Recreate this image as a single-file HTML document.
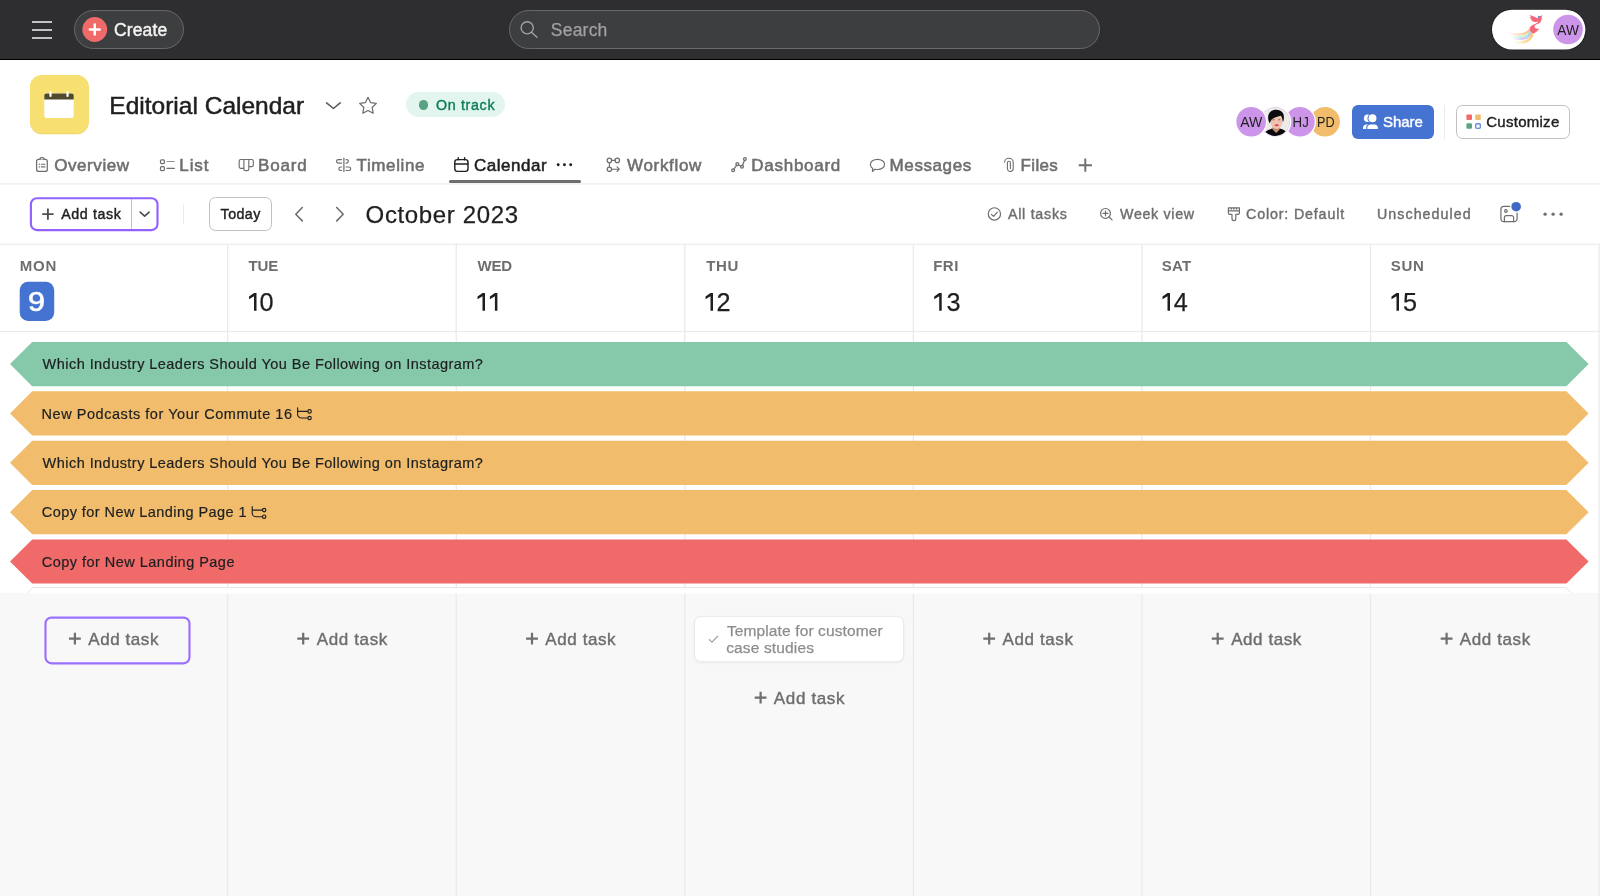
<!DOCTYPE html>
<html><head><meta charset="utf-8"><title>Editorial Calendar</title>
<style>
*{box-sizing:border-box;margin:0;padding:0}
html,body{width:1600px;height:896px;overflow:hidden;background:#fff}
body{font-family:"Liberation Sans",sans-serif;color:#1e1f21;position:relative}
#wrap{position:absolute;left:0;top:0;width:1600px;height:896px;will-change:transform}
.abs{position:absolute}
.t{position:absolute;white-space:nowrap;line-height:1}
.med{-webkit-text-stroke:0.4px currentColor}
.semi{-webkit-text-stroke:0.55px currentColor}
svg{position:absolute;overflow:visible}
/* top bar */
#topbar{left:0;top:0;width:1600px;height:59px;background:#2e2e30}
#topline{left:0;top:59px;width:1600px;height:1px;background:#000}
#create{left:74px;top:10px;width:110px;height:39px;border-radius:20px;background:#3d3e40;border:1px solid #68686a}
#search{left:509px;top:10px;width:591px;height:39px;border-radius:20px;background:#3d3e40;border:1px solid #69696b}
/* header */
#tx-title{-webkit-text-stroke:0.5px currentColor}
#tx-search,#tx-month,.dnum,#tx-card1,#tx-card2{-webkit-text-stroke:0.25px currentColor}
#tx-n1{transform:scaleX(1.13);transform-origin:0 0;-webkit-text-stroke:0.6px currentColor}
#pill{left:406px;top:92px;width:99px;height:25px;border-radius:13px;background:#e2f5ee}
.tab{color:#6d6e6f;font-size:16.5px}
#tabsel{left:449px;top:180px;width:132px;height:3px;background:#6d6e6f;border-radius:1.5px}
/* toolbar */
#adddiv{left:131px;top:199px;width:1px;height:30px;background:#c2c0c0}
#tsep{left:183px;top:204px;width:1px;height:20px;background:#edeae9}
#today{left:209px;top:197px;width:63px;height:34px;border-radius:6.5px;border:1px solid #c2bfbf;background:#fff}
.tl{color:#6d6e6f;font-size:14px}
/* calendar */
#greyarea{left:0;top:593px;width:1600px;height:303px;background:#f9f8f8}
.dow{color:#6d6e6f;font-size:14px;font-weight:bold;letter-spacing:.6px}
.dnum{font-size:24px;color:#1e1f21}
.bt{font-size:14.5px;color:#1e1f21;-webkit-text-stroke:0.2px currentColor}
.addt{color:#6d6e6f;font-size:18px}
#card{left:694px;top:616px;width:210px;height:46px;border-radius:7px;background:#fff;border:1px solid #edeae9;box-shadow:0 1px 3px rgba(0,0,0,.06)}
/*FIT-START*/
#tx-create{left:114.00px!important;top:22.00px!important;font-size:17.5px!important;letter-spacing:0.130px!important}
#tx-search{left:550.80px!important;top:22.00px!important;font-size:17.5px!important;letter-spacing:0.220px!important}
#tx-title{left:109.30px!important;top:94.00px!important;font-size:24.5px!important;letter-spacing:0.006px!important}
#tx-ontrack{left:436.00px!important;top:98.00px!important;font-size:14.25px!important;letter-spacing:0.671px!important}
#tx-share{left:1382.90px!important;top:114.00px!important;font-size:15px!important;letter-spacing:-0.000px!important}
#tx-cust{left:1486.20px!important;top:114.00px!important;font-size:15px!important;letter-spacing:0.275px!important}
#tx-t1{left:54.20px!important;top:157.00px!important;font-size:17px!important;letter-spacing:0.579px!important}
#tx-t2{left:179.30px!important;top:157.00px!important;font-size:17px!important;letter-spacing:0.900px!important}
#tx-t3{left:258.00px!important;top:157.00px!important;font-size:17px!important;letter-spacing:0.825px!important}
#tx-t4{left:356.60px!important;top:157.00px!important;font-size:17px!important;letter-spacing:0.600px!important}
#tx-t5{left:473.90px!important;top:157.00px!important;font-size:17px!important;letter-spacing:0.557px!important}
#tx-t6{left:627.00px!important;top:157.00px!important;font-size:17px!important;letter-spacing:0.686px!important}
#tx-t7{left:751.30px!important;top:157.00px!important;font-size:17px!important;letter-spacing:0.731px!important}
#tx-t8{left:889.60px!important;top:157.00px!important;font-size:17px!important;letter-spacing:0.586px!important}
#tx-t9{left:1020.60px!important;top:157.00px!important;font-size:17px!important;letter-spacing:0.325px!important}
#tx-add0{left:61.20px!important;top:207.00px!important;font-size:14.25px!important;letter-spacing:0.614px!important}
#tx-today{left:220.60px!important;top:207.00px!important;font-size:14.25px!important;letter-spacing:0.425px!important}
#tx-month{left:365.60px!important;top:203.00px!important;font-size:24px!important;letter-spacing:0.645px!important}
#tx-all{left:1007.90px!important;top:207.00px!important;font-size:14.25px!important;letter-spacing:0.744px!important}
#tx-week{left:1120.00px!important;top:207.00px!important;font-size:14.25px!important;letter-spacing:0.687px!important}
#tx-color{left:1246.10px!important;top:207.00px!important;font-size:14.25px!important;letter-spacing:0.838px!important}
#tx-uns{left:1377.00px!important;top:207.00px!important;font-size:14.25px!important;letter-spacing:1.040px!important}
#tx-b1{left:42.60px!important;top:357.00px!important;font-size:14.5px!important;letter-spacing:0.453px!important}
#tx-b2{left:41.60px!important;top:407.00px!important;font-size:14.5px!important;letter-spacing:0.539px!important}
#tx-b3{left:42.60px!important;top:456.00px!important;font-size:14.5px!important;letter-spacing:0.453px!important}
#tx-b4{left:41.80px!important;top:505.00px!important;font-size:14.5px!important;letter-spacing:0.435px!important}
#tx-b5{left:41.80px!important;top:555.00px!important;font-size:14.5px!important;letter-spacing:0.471px!important}
#tx-card1{left:726.90px!important;top:623.00px!important;font-size:15.5px!important;letter-spacing:0.125px!important}
#tx-card2{left:726.20px!important;top:640.00px!important;font-size:15.5px!important;letter-spacing:0.145px!important}
#tx-d1{left:19.70px!important;top:258.00px!important;font-size:15px!important;letter-spacing:0.800px!important}
#tx-d2{left:248.60px!important;top:258.00px!important;font-size:15px!important;letter-spacing:-0.225px!important}
#tx-d3{left:477.50px!important;top:258.00px!important;font-size:15px!important;letter-spacing:-0.200px!important}
#tx-d4{left:706.20px!important;top:258.00px!important;font-size:15px!important;letter-spacing:0.600px!important}
#tx-d5{left:933.20px!important;top:258.00px!important;font-size:15px!important;letter-spacing:0.500px!important}
#tx-d6{left:1161.80px!important;top:258.00px!important;font-size:15px!important;letter-spacing:0.200px!important}
#tx-d7{left:1390.80px!important;top:258.00px!important;font-size:15px!important;letter-spacing:0.700px!important}
#tx-n1{left:28.20px!important;top:289.00px!important;font-size:27px!important;letter-spacing:14.300px!important}
#tx-n2{left:259.50px!important;top:290.00px!important;font-size:25.25px!important;letter-spacing:0.000px!important}
#tx-n4{left:716.50px!important;top:290.00px!important;font-size:25.25px!important;letter-spacing:0.000px!important}
#tx-n5{left:946.40px!important;top:290.00px!important;font-size:25.25px!important;letter-spacing:0.000px!important}
#tx-n6{left:1173.80px!important;top:290.00px!important;font-size:25.25px!important;letter-spacing:0.000px!important}
#tx-n7{left:1402.90px!important;top:290.00px!important;font-size:25.25px!important;letter-spacing:0.000px!important}
#tx-a1{left:88.29px!important;top:631.00px!important;font-size:17px!important;letter-spacing:0.571px!important}
#tx-a2{left:316.78px!important;top:631.00px!important;font-size:17px!important;letter-spacing:0.629px!important}
#tx-a3{left:545.27px!important;top:631.00px!important;font-size:17px!important;letter-spacing:0.600px!important}
#tx-a4{left:773.86px!important;top:690.00px!important;font-size:17px!important;letter-spacing:0.643px!important}
#tx-a5{left:1002.55px!important;top:631.00px!important;font-size:17px!important;letter-spacing:0.600px!important}
#tx-a6{left:1231.13px!important;top:631.00px!important;font-size:17px!important;letter-spacing:0.571px!important}
#tx-a7{left:1459.72px!important;top:631.00px!important;font-size:17px!important;letter-spacing:0.614px!important}
/*FIT-END*/
</style></head><body>
<div id="wrap">
<div class="abs" id="topbar"></div><div class="abs" id="topline"></div>
<div class="abs" id="create"></div>
<div class="t med" id="tx-create" style="left:114.5px;top:20px;font-size:17.5px;color:#f5f4f3">Create</div>
<div class="abs" id="search"></div>
<div class="t" id="tx-search" style="left:551.5px;top:20px;font-size:17.5px;color:#a2a0a2">Search</div>

<!-- project header -->
<div class="t" id="tx-title" style="left:110.5px;top:93px;font-size:24px;color:#1e1f21">Editorial Calendar</div>
<div class="abs" id="pill"></div>
<div class="abs" style="left:418.5px;top:100px;width:9.5px;height:9.5px;border-radius:50%;background:#58a182"></div>
<div class="t med" id="tx-ontrack" style="left:436px;top:97.5px;font-size:14.5px;color:#0d7f56">On track</div>

<!-- avatars -->

<div class="abs" style="left:1352px;top:105px;width:82px;height:34px;border-radius:6px;background:#4573d2"></div>
<div class="t med" id="tx-share" style="left:1383.5px;top:114.5px;font-size:14.5px;color:#fff">Share</div>
<div class="abs" style="left:1444px;top:105px;width:1px;height:34px;background:#edeae9"></div>
<div class="abs" style="left:1456px;top:105px;width:114px;height:34px;border-radius:6.5px;background:#fff;border:1px solid #c2bfbf"></div>
<div class="t med" id="tx-cust" style="left:1486.5px;top:114.5px;font-size:14.5px;color:#1e1f21">Customize</div>

<!-- tabs -->
<div class="abs" id="tabsel"></div>
<div class="t tab semi" id="tx-t1" style="left:54px;top:156.5px">Overview</div>
<div class="t tab semi" id="tx-t2" style="left:180px;top:156.5px">List</div>
<div class="t tab semi" id="tx-t3" style="left:259px;top:156.5px">Board</div>
<div class="t tab semi" id="tx-t4" style="left:356px;top:156.5px">Timeline</div>
<div class="t tab semi" id="tx-t5" style="left:474px;top:156.5px;color:#1e1f21">Calendar</div>
<div class="t tab semi" id="tx-t6" style="left:626px;top:156.5px">Workflow</div>
<div class="t tab semi" id="tx-t7" style="left:751px;top:156.5px">Dashboard</div>
<div class="t tab semi" id="tx-t8" style="left:889px;top:156.5px">Messages</div>
<div class="t tab semi" id="tx-t9" style="left:1021px;top:156.5px">Files</div>

<!-- toolbar -->
<div class="abs" id="adddiv"></div>
<div class="t med" id="tx-add0" style="left:61px;top:207px;font-size:14.5px;color:#1e1f21">Add task</div>
<div class="abs" id="tsep"></div>
<div class="abs" id="today"></div>
<div class="t med" id="tx-today" style="left:220.5px;top:207px;font-size:14.5px;color:#1e1f21">Today</div>
<div class="t" id="tx-month" style="left:366.5px;top:202px;font-size:24px;color:#1e1f21">October 2023</div>
<div class="t tl med" id="tx-all" style="left:1008px;top:207px">All tasks</div>
<div class="t tl med" id="tx-week" style="left:1120px;top:207px">Week view</div>
<div class="t tl med" id="tx-color" style="left:1246.5px;top:207px">Color: Default</div>
<div class="t tl med" id="tx-uns" style="left:1378px;top:207px">Unscheduled</div>

<!-- calendar columns -->
<div class="abs" id="greyarea"></div>
<svg id="grid" style="left:0;top:0" width="1600" height="896" viewBox="0 0 1600 896" shape-rendering="geometricPrecision">
<rect x="0" y="183.35" width="1600" height="1.15" fill="#edebea"/>
<rect x="0" y="243.7" width="1600" height="1.2" fill="#edebea"/>
<rect x="0" y="330.95" width="1600" height="1.2" fill="#edebea"/>
<rect x="227.05" y="244" width="1.2" height="652" fill="#ebe9e8"/>
<rect x="455.62" y="244" width="1.2" height="652" fill="#ebe9e8"/>
<rect x="684.19" y="244" width="1.2" height="652" fill="#ebe9e8"/>
<rect x="912.76" y="244" width="1.2" height="652" fill="#ebe9e8"/>
<rect x="1141.33" y="244" width="1.2" height="652" fill="#ebe9e8"/>
<rect x="1369.91" y="244" width="1.2" height="652" fill="#ebe9e8"/>
<rect x="1598.48" y="244" width="1.2" height="652" fill="#ebe9e8"/>
<polygon points="32.2,342.0 1566.4,342.0 1588.6,364.10 1566.4,386.20 32.2,386.20 10,364.10" fill="#86c8aa"/>
<polygon points="32.2,391.35 1566.4,391.35 1588.6,413.45 1566.4,435.55 32.2,435.55 10,413.45" fill="#f1bd6c"/>
<polygon points="32.2,440.7 1566.4,440.7 1588.6,462.80 1566.4,484.90 32.2,484.90 10,462.80" fill="#f1bd6c"/>
<polygon points="32.2,490.05 1566.4,490.05 1588.6,512.15 1566.4,534.25 32.2,534.25 10,512.15" fill="#f1bd6c"/>
<polygon points="32.2,539.4 1566.4,539.4 1588.6,561.50 1566.4,583.60 32.2,583.60 10,561.50" fill="#f06a6a"/>
<rect x="19.7" y="281.7" width="34.5" height="39.3" rx="8.5" fill="#4573d2"/>
</svg>

<div class="t dow" id="tx-d1" style="left:20px;top:259.5px">MON</div>
<div class="t dow" id="tx-d2" style="left:249px;top:259.5px">TUE</div>
<div class="t dow" id="tx-d3" style="left:477px;top:259.5px">WED</div>
<div class="t dow" id="tx-d4" style="left:706px;top:259.5px">THU</div>
<div class="t dow" id="tx-d5" style="left:934px;top:259.5px">FRI</div>
<div class="t dow" id="tx-d6" style="left:1163px;top:259.5px">SAT</div>
<div class="t dow" id="tx-d7" style="left:1391px;top:259.5px">SUN</div>
<div class="t dnum" id="tx-n1" style="left:30px;top:290px;color:#fff">9</div>
<div class="t dnum" id="tx-n2" style="left:248px;top:290px">0</div>
<div class="t dnum" id="tx-n3" style="left:477px;top:290px"></div>
<div class="t dnum" id="tx-n4" style="left:705px;top:290px">2</div>
<div class="t dnum" id="tx-n5" style="left:934px;top:290px">3</div>
<div class="t dnum" id="tx-n6" style="left:1162px;top:290px">4</div>
<div class="t dnum" id="tx-n7" style="left:1391px;top:290px">5</div>

<!-- bars -->
<div class="t bt" id="tx-b1" style="left:42px;top:357px">Which Industry Leaders Should You Be Following on Instagram?</div>
<div class="t bt" id="tx-b2" style="left:42px;top:406.3px">New Podcasts for Your Commute 16</div>
<div class="t bt" id="tx-b3" style="left:42px;top:455.5px">Which Industry Leaders Should You Be Following on Instagram?</div>
<div class="t bt" id="tx-b4" style="left:42px;top:504.8px">Copy for New Landing Page 1</div>
<div class="t bt" id="tx-b5" style="left:42px;top:554px">Copy for New Landing Page</div>

<!-- bottom -->
<div class="abs" id="card"></div>
<div class="t" id="tx-card1" style="left:726.5px;top:623px;font-size:14.5px;color:#8d8c8e">Template for customer</div>
<div class="t" id="tx-card2" style="left:726.5px;top:640.2px;font-size:14.5px;color:#8d8c8e">case studies</div>

<div class="t addt med" id="tx-a1" style="left:88.5px;top:629.5px">Add task</div>
<div class="t addt med" id="tx-a2" style="left:316.5px;top:629.5px">Add task</div>
<div class="t addt med" id="tx-a3" style="left:545.5px;top:629.5px">Add task</div>
<div class="t addt med" id="tx-a4" style="left:774px;top:688.5px">Add task</div>
<div class="t addt med" id="tx-a5" style="left:1002.5px;top:629.5px">Add task</div>
<div class="t addt med" id="tx-a6" style="left:1230.5px;top:629.5px">Add task</div>
<div class="t addt med" id="tx-a7" style="left:1460px;top:629.5px">Add task</div>
<!--ICONS-START-->
<svg id="icons" style="left:0;top:0;pointer-events:none" width="1600" height="896" viewBox="0 0 1600 896" fill="none" stroke-linecap="round" stroke-linejoin="round">
<defs>
<linearGradient id="tg1" x1="1509" y1="0" x2="1532" y2="0" gradientUnits="userSpaceOnUse"><stop offset="0" stop-color="#fbc58a" stop-opacity="0"/><stop offset=".45" stop-color="#fbc58a" stop-opacity=".75"/><stop offset="1" stop-color="#f7a35e"/></linearGradient>
<linearGradient id="tg2" x1="1511" y1="0" x2="1532" y2="0" gradientUnits="userSpaceOnUse"><stop offset="0" stop-color="#a8f0cf" stop-opacity="0"/><stop offset=".5" stop-color="#a8f0cf" stop-opacity=".85"/><stop offset="1" stop-color="#8fe3a8"/></linearGradient>
<linearGradient id="tg3" x1="1512" y1="0" x2="1532" y2="0" gradientUnits="userSpaceOnUse"><stop offset="0" stop-color="#c4b5f7" stop-opacity="0"/><stop offset=".5" stop-color="#bcb0f5" stop-opacity=".85"/><stop offset="1" stop-color="#9db4f4"/></linearGradient>
<linearGradient id="tg4" x1="1514" y1="0" x2="1533" y2="0" gradientUnits="userSpaceOnUse"><stop offset="0" stop-color="#fde2a0" stop-opacity="0"/><stop offset=".5" stop-color="#fcd98a" stop-opacity=".85"/><stop offset="1" stop-color="#f9bd5e"/></linearGradient>
<clipPath id="pc"><circle cx="1275.2" cy="121.8" r="14.1"/></clipPath>
</defs>
<!-- project icon -->
<rect x="30" y="75.3" width="58.7" height="58.9" rx="12" fill="#ecd367"/>
<rect x="30" y="74.9" width="58.7" height="58.7" rx="12" fill="#f8df72"/>
<rect x="44.3" y="93.4" width="29.4" height="24.5" rx="2" fill="#fff"/>
<path d="M44.3 99.5v-4.100a2 2 0 0 1 2-2h25.400a2 2 0 0 1 2 2v4.100z" fill="#504a2c"/>
<rect x="49.400" y="91.100" width="2.200" height="5.900" rx="1.100" fill="#fff"/><rect x="66.450" y="91.100" width="2.200" height="5.900" rx="1.100" fill="#fff"/>
<!-- user pill -->
<rect x="1491.200" y="8.900" width="95" height="41.400" rx="20.700" fill="#1d1d1f"/>
<rect x="1492" y="9.700" width="93.400" height="39.800" rx="19.900" fill="#fff"/>
<!-- hamburger -->
<path d="M32 22h20M32 30h20M32 38h20" stroke="#f5f4f3" stroke-width="1.7" stroke-linecap="butt"/>
<!-- create -->
<circle cx="94.75" cy="29.5" r="12.4" fill="#f06a6a"/>
<path d="M94.75 24.6v9.8M89.85 29.5h9.8" stroke="#fff" stroke-width="2.5"/>
<!-- search -->
<circle cx="527.2" cy="27.8" r="6.1" stroke="#a2a0a2" stroke-width="1.4"/>
<path d="M531.7 32.4L537 37.3" stroke="#a2a0a2" stroke-width="1.4"/>
<!-- bird -->
<g style="filter:blur(.35px)" opacity=".82">
<path d="M1531.300 27.500C1528 34 1520 35.800 1509.500 33.200" stroke="url(#tg1)" stroke-width="2.400"/>
<path d="M1531.700 29.300C1529.300 36.600 1521.500 38.100 1512 36.300" stroke="url(#tg2)" stroke-width="1.900"/>
<path d="M1532.100 30.500C1530.300 38.300 1522.800 40 1513.500 38.400" stroke="url(#tg3)" stroke-width="1.900"/>
<path d="M1532.700 31.500C1531.800 40.300 1525.300 43.200 1516 42.300" stroke="url(#tg4)" stroke-width="2.600"/>
</g>
<path d="M1542.700 15.200L1540.500 16.100C1538.600 15.900 1537.600 17.200 1537.600 18.500C1535 16.300 1531.600 15.500 1529.100 15.200L1531.300 16.700L1529.300 16.900L1531.500 18.300L1529.800 18.800L1532.300 20L1531.200 20.700L1533.900 21.700C1535.400 22.100 1536.900 22 1538.100 21.600C1537.900 22.700 1536.900 23.400 1535.500 23.800C1532 24.800 1529.700 26.800 1529.900 29.600C1530 31.700 1531.500 32.800 1533.300 33.200L1535.600 32.900L1535 32L1537.500 31.600L1536.700 30.700L1539.200 29.900L1538.200 29.300L1539.900 28.300C1537.800 29.300 1535.200 28.800 1534.600 27C1534.200 25.500 1535.300 24.700 1536.900 24.300C1539.800 23.600 1541.500 21.600 1541.600 19C1541.650 17.600 1541.700 16.400 1542.700 15.200Z" fill="#f5667a"/>
<circle cx="1538.800" cy="16.800" r="0.950" fill="#5b8def"/>
<!-- title chevron + star -->
<path d="M326.6 102.9L333.4 108.5L340.2 102.9" stroke="#58595b" stroke-width="1.6"/>
<path d="M368 97.3l2.55 5.3 5.8.8-4.2 4.05 1 5.75-5.15-2.75-5.15 2.75 1-5.75-4.2-4.05 5.8-.8z" stroke="#6d6e6f" stroke-width="1.25"/>
<!-- tab: overview -->
<g stroke="#6d6e6f" stroke-width="1.25">
<rect x="36.6" y="159.4" width="10.7" height="12" rx="2"/>
<path d="M39.9 159.4a2.1 1.7 0 0 1 4.2 0" fill="#fff"/>
<path d="M41.4 164.2h3.6M41.4 166.9h3.6" stroke-width="1.1"/>
<path d="M39.3 164.2h.2M39.3 166.9h.2" stroke-width="1.3"/>
<!-- list -->
<rect x="160.5" y="159.75" width="3.9" height="3.9" rx="1.1"/>
<rect x="160.5" y="166.65" width="3.9" height="3.9" rx="1.1"/>
<path d="M167 161.5h7.3" stroke-width="1" opacity=".75"/><path d="M167 168.4h7.3"/>
<!-- board -->
<path d="M243.9 159.5h-3.1a1.6 1.6 0 0 0-1.6 1.6v5.6a1.6 1.6 0 0 0 1.6 1.6h3.1zM243.9 159.5v9.5a1.6 1.6 0 0 0 1.6 1.6h1.7a1.6 1.6 0 0 0 1.6-1.6v-9.5zM248.8 159.5h2.9a1.6 1.6 0 0 1 1.6 1.6v3.9a1.6 1.6 0 0 1-1.6 1.6h-2.9z" stroke-width="1.15"/>
<!-- timeline -->
<path d="M343.9 158.2v13.3" stroke-width="1.2"/>
<path d="M341.6 159.6h-3.3a1.75 1.75 0 0 0 0 3.5h3.3M346 159.6h.6a1.75 1.75 0 0 1 0 3.5h-.6" stroke-width="1.2"/>
<path d="M341.6 167h-1a1.75 1.75 0 0 0 0 3.5h1M346 167h2.9a1.75 1.75 0 0 1 0 3.5h-2.9" stroke-width="1.2"/>
<!-- workflow -->
<circle cx="609.4" cy="160.4" r="2.2"/><circle cx="617.3" cy="160.4" r="2.2"/><circle cx="609.4" cy="169.2" r="2.2"/>
<path d="M611.6 160.4h3.5M609.4 162.6v4.4M611.6 169.2h7.6M617 166.9l2.3 2.3l-2.3 2.3" stroke-width="1.1"/>
<!-- dashboard -->
<circle cx="733.1" cy="170.2" r="1.4"/><circle cx="737.3" cy="164.1" r="1.4"/><circle cx="742" cy="166.8" r="1.4"/><circle cx="744.9" cy="159.1" r="1.4"/>
<path d="M733.9 169L736.5 165.3M738.5 164.8L740.8 166.1M742.5 165.5L744.4 160.4" stroke-width="1.3"/>
<!-- messages -->
<path d="M877.5 159.3c4 0 7.1 2.3 7.1 5.1s-3.100 5.100-7.100 5.100c-.9 0-1.800-.1-2.600-.3l-2.500 2.300l.3-3.100c-1.400-.9-2.300-2.300-2.300-4c0-2.800 3.100-5.100 7.100-5.100z" stroke-width="1.15"/>
<!-- files paperclip -->
<path d="M1004.600 162.300a4.300 4 0 0 1 8.600 0v6.300a2.900 2.900 0 0 1-5.800 0v-5.900a1.500 1.500 0 0 1 3 0v5.900" stroke-width="1.1"/>
<!-- plus -->
<path d="M1085.300 158.600v13.200M1078.700 165.200h13.200" stroke-width="1.9" stroke-linecap="butt"/>
</g>
<!-- tab: calendar (dark) -->
<g stroke="#1e1f21" stroke-width="1.4">
<rect x="454.800" y="159.600" width="13.200" height="11.800" rx="2.600"/>
<path d="M454.800 164h13.200M458.200 157.800v2M464.600 157.800v2"/>
</g>
<g fill="#1e1f21"><circle cx="558.200" cy="164.800" r="1.450"/><circle cx="564.450" cy="164.800" r="1.450"/><circle cx="570.700" cy="164.800" r="1.450"/></g>
<!-- share icon -->
<g>
<circle cx="1367.700" cy="118.200" r="3.800" fill="#fff"/>
<path d="M1363 129v-1.200c0-1.800 1.400-3.200 3.200-3.200h3v4.400z" fill="#fff"/>
<circle cx="1372.500" cy="118.300" r="5.050" fill="#4573d2"/>
<path d="M1366.200 130v-2.300c0-2.400 1.900-4.300 4.300-4.300h4.200c2.400 0 4.300 1.900 4.300 4.300v2.300z" fill="#4573d2"/>
<circle cx="1372.500" cy="118.300" r="3.950" fill="#fff"/>
<path d="M1367.300 129v-1.300c0-1.800 1.400-3.200 3.200-3.200h4.200c1.800 0 3.200 1.400 3.200 3.200v1.300z" fill="#fff"/>
</g>
<!-- customize icon -->
<rect x="1466.400" y="114.500" width="5.600" height="5.500" rx="1.100" fill="#f06a6a"/>
<rect x="1475.200" y="114.500" width="5.600" height="5.500" rx="1.100" fill="#f1bd6c"/>
<rect x="1466.400" y="123.300" width="5.600" height="5.500" rx="1.100" fill="#5da283"/>
<rect x="1475.750" y="123.850" width="4.500" height="4.400" rx=".7" stroke="#4573d2" stroke-width="1.100" fill="#fff"/>
<!-- toolbar -->
<rect x="30.9" y="198.2" width="126.6" height="31.85" rx="6" stroke="#9162ff" stroke-width="2.15"/>
<rect x="45.5" y="617.6" width="144" height="45.7" rx="6" stroke="#9b70ff" stroke-width="2.15"/>
<path d="M47.900 208.400v11.400M42.200 214.100h11.400" stroke="#4f5052" stroke-width="1.900" stroke-linecap="butt"/>
<path d="M140.200 212.100l4.450 4l4.450-4" stroke="#4f5052" stroke-width="1.700"/>
<path d="M302.300 207.500l-6.500 6.700l6.500 6.700M336.700 207.500l6.500 6.700l-6.500 6.700" stroke="#6d6e6f" stroke-width="1.600"/>
<g stroke="#6d6e6f" stroke-width="1.200">
<circle cx="994.400" cy="213.900" r="6.150"/><path d="M991.400 214.300l2.100 2.100l3.900-4.300"/>
<circle cx="1105.500" cy="213.400" r="4.900"/><path d="M1105.500 211v4.800M1103.100 213.400h4.800M1109.100 217l3 2.900"/>
<!-- brush -->
<path d="M1228.400 207.800h11v5.300a1.300 1.300 0 0 1-1.300 1.300h-2.300v4.400a1.900 1.900 0 0 1-3.800 0v-4.400h-2.300a1.300 1.300 0 0 1-1.300-1.300zM1228.400 210.900h11M1231.200 207.800v1.400M1233.900 207.800v1.400M1236.600 207.800v1.400"/>
<!-- save -->
<path d="M1509.600 206.400h-5.700a3 3 0 0 0-3 3v9.300a3 3 0 0 0 3 3h10.200a3 3 0 0 0 3-3v-5.700"/>
<path d="M1504.400 221.700v-4.200a1.900 1.900 0 0 1 1.900-1.900h5.400a1.900 1.900 0 0 1 1.900 1.900v4.200"/>
<circle cx="1505.900" cy="211" r="1.300"/>
</g>
<circle cx="1516.150" cy="206.700" r="4.800" fill="#3f6ac4"/>
<g fill="#6d6e6f"><circle cx="1545.100" cy="214.200" r="1.650"/><circle cx="1553.100" cy="214.200" r="1.650"/><circle cx="1561.150" cy="214.200" r="1.650"/></g>
<!-- subtask icons -->
<g stroke="#1e1f21" stroke-width="1.150">
<path d="M297.600 407.900v6.300a3.800 3.800 0 0 0 3.800 3.800h6.100M297.600 411.400h9.900"/><circle cx="309.550" cy="411.400" r="1.700"/><circle cx="309.550" cy="418" r="1.700"/>
<path d="M252.200 506.600v6.300a3.800 3.800 0 0 0 3.800 3.800h6.100M252.200 510.100h9.900"/><circle cx="264.150" cy="510.100" r="1.700"/><circle cx="264.150" cy="516.700" r="1.700"/>
</g>
<path d="M27 593.5L32.9 587.6H1566.1L1572 593.5" stroke="#e6e3e2" stroke-width="1" fill="#fff"/>
<!-- ones -->
<g fill="#1e1f21">
<path d="M254.00 293.1h2.5v17.6h-2.5v-14.4l-5 2.9v-2.6z"/>
<path d="M482.50 293.1h2.5v17.6h-2.5v-14.4l-5 2.9v-2.6z"/>
<path d="M494.90 293.1h2.5v17.6h-2.5v-14.4l-5 2.9v-2.6z"/>
<path d="M710.50 293.1h2.5v17.6h-2.5v-14.4l-5 2.9v-2.6z"/>
<path d="M939.20 293.1h2.5v17.6h-2.5v-14.4l-5 2.9v-2.6z"/>
<path d="M1167.50 293.1h2.5v17.6h-2.5v-14.4l-5 2.9v-2.6z"/>
<path d="M1396.50 293.1h2.5v17.6h-2.5v-14.4l-5 2.9v-2.6z"/>
</g>
<!-- add task pluses -->
<g stroke="#6d6e6f" stroke-width="2.200" stroke-linecap="butt" id="pluses">
<path d="M74.900 632.700v11.800M69 638.600h11.800"/>
<path d="M303.200 632.700v11.800M297.300 638.600h11.800"/>
<path d="M532 632.700v11.800M526.100 638.600h11.800"/>
<path d="M760.600 691.700v11.800M754.700 697.600h11.800"/>
<path d="M989.200 632.700v11.800M983.300 638.600h11.800"/>
<path d="M1217.700 632.700v11.800M1211.800 638.600h11.800"/>
<path d="M1446.600 632.700v11.800M1440.700 638.600h11.800"/>
</g>
<path d="M709.300 639.600l2.700 2.500l5.600-5.800" stroke="#a2a0a2" stroke-width="1.250"/>
<!-- facepile -->
<g font-family="Liberation Sans, sans-serif" font-size="14" fill="#1e1f21" text-anchor="middle">
<circle cx="1325.1" cy="121.8" r="14.8" fill="#f1bd6c"/>
<text x="1325.8" y="126.6" textLength="17.6" lengthAdjust="spacingAndGlyphs">PD</text>
<circle cx="1299.95" cy="121.8" r="16.1" fill="#fff"/>
<circle cx="1299.95" cy="121.8" r="14.8" fill="#cd95ea"/>
<text x="1300.7" y="126.6" textLength="16.2" lengthAdjust="spacingAndGlyphs">HJ</text>
<circle cx="1275.2" cy="121.8" r="16.1" fill="#fff"/>
<circle cx="1275.2" cy="121.8" r="14.8" fill="#e3cdea"/>
<g clip-path="url(#pc)">
<rect x="1259" y="105" width="33" height="34" fill="#ecebe8"/>
<path d="M1263 138c0-5.500 4-8.200 9.400-9.400l3.800 3.600l3.600-3.600c5.200 1.200 8.200 3.900 8.200 9.400z" fill="#09090b"/>
<path d="M1272.600 126.500v3l3.600 3.400l3.400-3.400v-3z" fill="#c48a6e"/>
<ellipse cx="1276.400" cy="121.600" rx="6.100" ry="7.400" fill="#efc3b2"/>
<path d="M1269.800 123.300c-2.600-4.300-2.300-9.800 1.600-12.300c3.600-2.300 9.200-1.600 11.300 1.700c1.700 2.700 1.600 6.600.2 9.500c-.2-2.600-.9-4.600-1.900-6.500c-3 .6-6.600 1.600-9.300 3.800c-.9 1.100-1.500 2.300-1.900 3.800z" fill="#0c0b0d"/>
<ellipse cx="1276.700" cy="125.200" rx="2.100" ry="1" fill="#d8464b"/>
<ellipse cx="1273.600" cy="119.700" rx="1.100" ry=".5" fill="#7a4a3c"/><ellipse cx="1279.300" cy="119.700" rx="1.100" ry=".5" fill="#7a4a3c"/>
</g>
<circle cx="1251.2" cy="121.800" r="16.1" fill="#fff"/>
<circle cx="1251.2" cy="121.800" r="14.8" fill="#cd95ea"/>
<text x="1251.2" y="126.600" textLength="22.100" lengthAdjust="spacingAndGlyphs">AW</text>
<circle cx="1568" cy="29.500" r="14.800" fill="#cd95ea"/>
<text x="1568.100" y="34.900" textLength="21.600" lengthAdjust="spacingAndGlyphs">AW</text>
</g>
</svg>
<!--ICONS-END-->
</div>
</body></html>
